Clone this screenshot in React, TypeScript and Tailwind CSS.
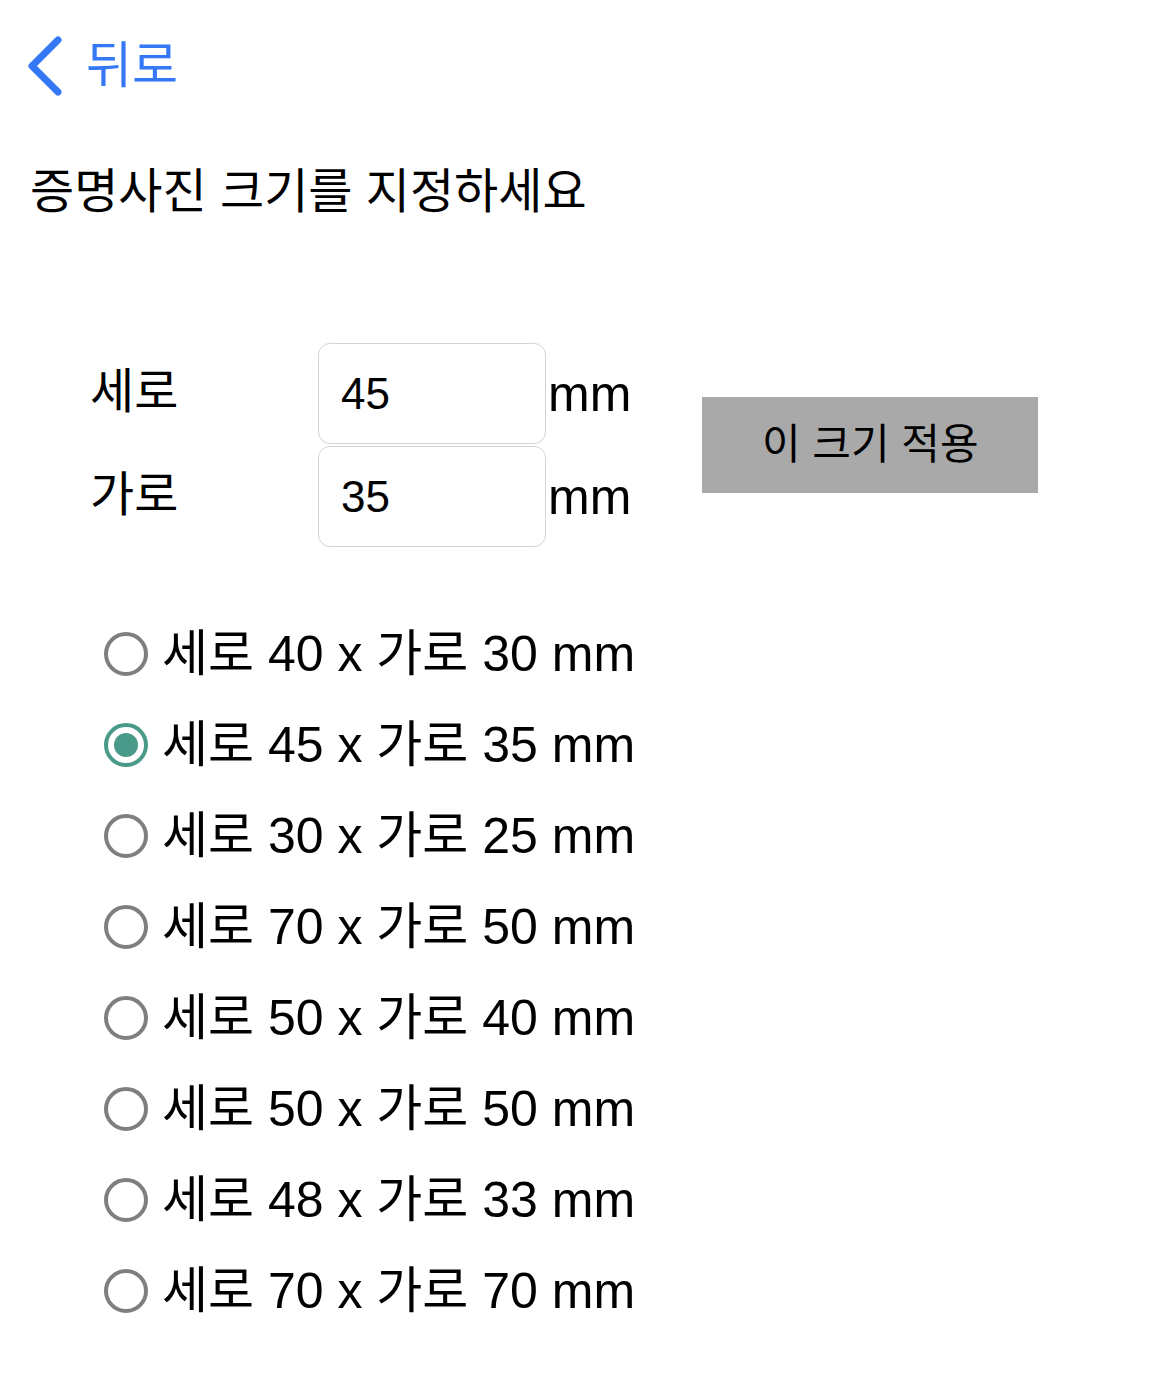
import React, { useState } from "react";

const sizes = [
  [40, 30],
  [45, 35],
  [30, 25],
  [70, 50],
  [50, 40],
  [50, 50],
  [48, 33],
  [70, 70],
];

export default function App() {
  const [sel, setSel] = useState(1);
  return (
    <div
      className="w-[1170px] h-[1374px] bg-white text-black"
      style={{ fontFamily: '"Liberation Sans", "Noto Sans CJK KR", sans-serif' }}
    >
      <div className="flex items-center pl-[26px] pt-[36px] h-[96px]">
        <svg width="40" height="60" viewBox="0 0 40 60" className="shrink-0">
          <path d="M32 4 L6 30 L32 56" fill="none" stroke="#3478f6" strokeWidth="7" strokeLinecap="round" strokeLinejoin="round" />
        </svg>
        <span className="ml-[20px] text-[50px] leading-none text-[#3478f6]">뒤로</span>
      </div>

      <div className="pl-[30px] mt-[68px] text-[48px] leading-[56px]">증명사진 크기를 지정하세요</div>

      <div className="flex items-center mt-[123px] pl-[90px]">
        <div className="flex flex-col gap-[2px]">
          {[
            ["세로", "45"],
            ["가로", "35"],
          ].map(([l, v]) => (
            <div key={l} className="flex items-center h-[101px]">
              <div className="w-[228px] text-[48px] leading-none -mt-[4px]">{l}</div>
              <div className="w-[228px] h-[101px] border border-[#d4d4d4] rounded-[12px] flex items-center pl-[22px] text-[44px]">
                {v}
              </div>
              <div className="text-[50px] leading-none ml-[2px]">mm</div>
            </div>
          ))}
        </div>
        <button className="ml-[71px] w-[336px] h-[96px] bg-[#a9a9a9] text-[42px] leading-none flex items-center justify-center">
          이 크기 적용
        </button>
      </div>

      <div className="flex flex-col mt-[61px] pl-[104px]">
        {sizes.map(([h, w], i) => (
          <div key={i} className="flex items-center h-[91px] cursor-pointer" onClick={() => setSel(i)}>
            {sel === i ? (
              <div className="w-[44px] h-[44px] rounded-full border-[4px] border-[#4a9a8a] flex items-center justify-center">
                <div className="w-[24px] h-[24px] rounded-full bg-[#4a9a8a]" />
              </div>
            ) : (
              <div className="w-[44px] h-[44px] rounded-full border-[4px] border-[#7f7f7f]" />
            )}
            <span className="ml-[14px] text-[50px] leading-none">
              세로 {h} x 가로 {w} mm
            </span>
          </div>
        ))}
      </div>
    </div>
  );
}
